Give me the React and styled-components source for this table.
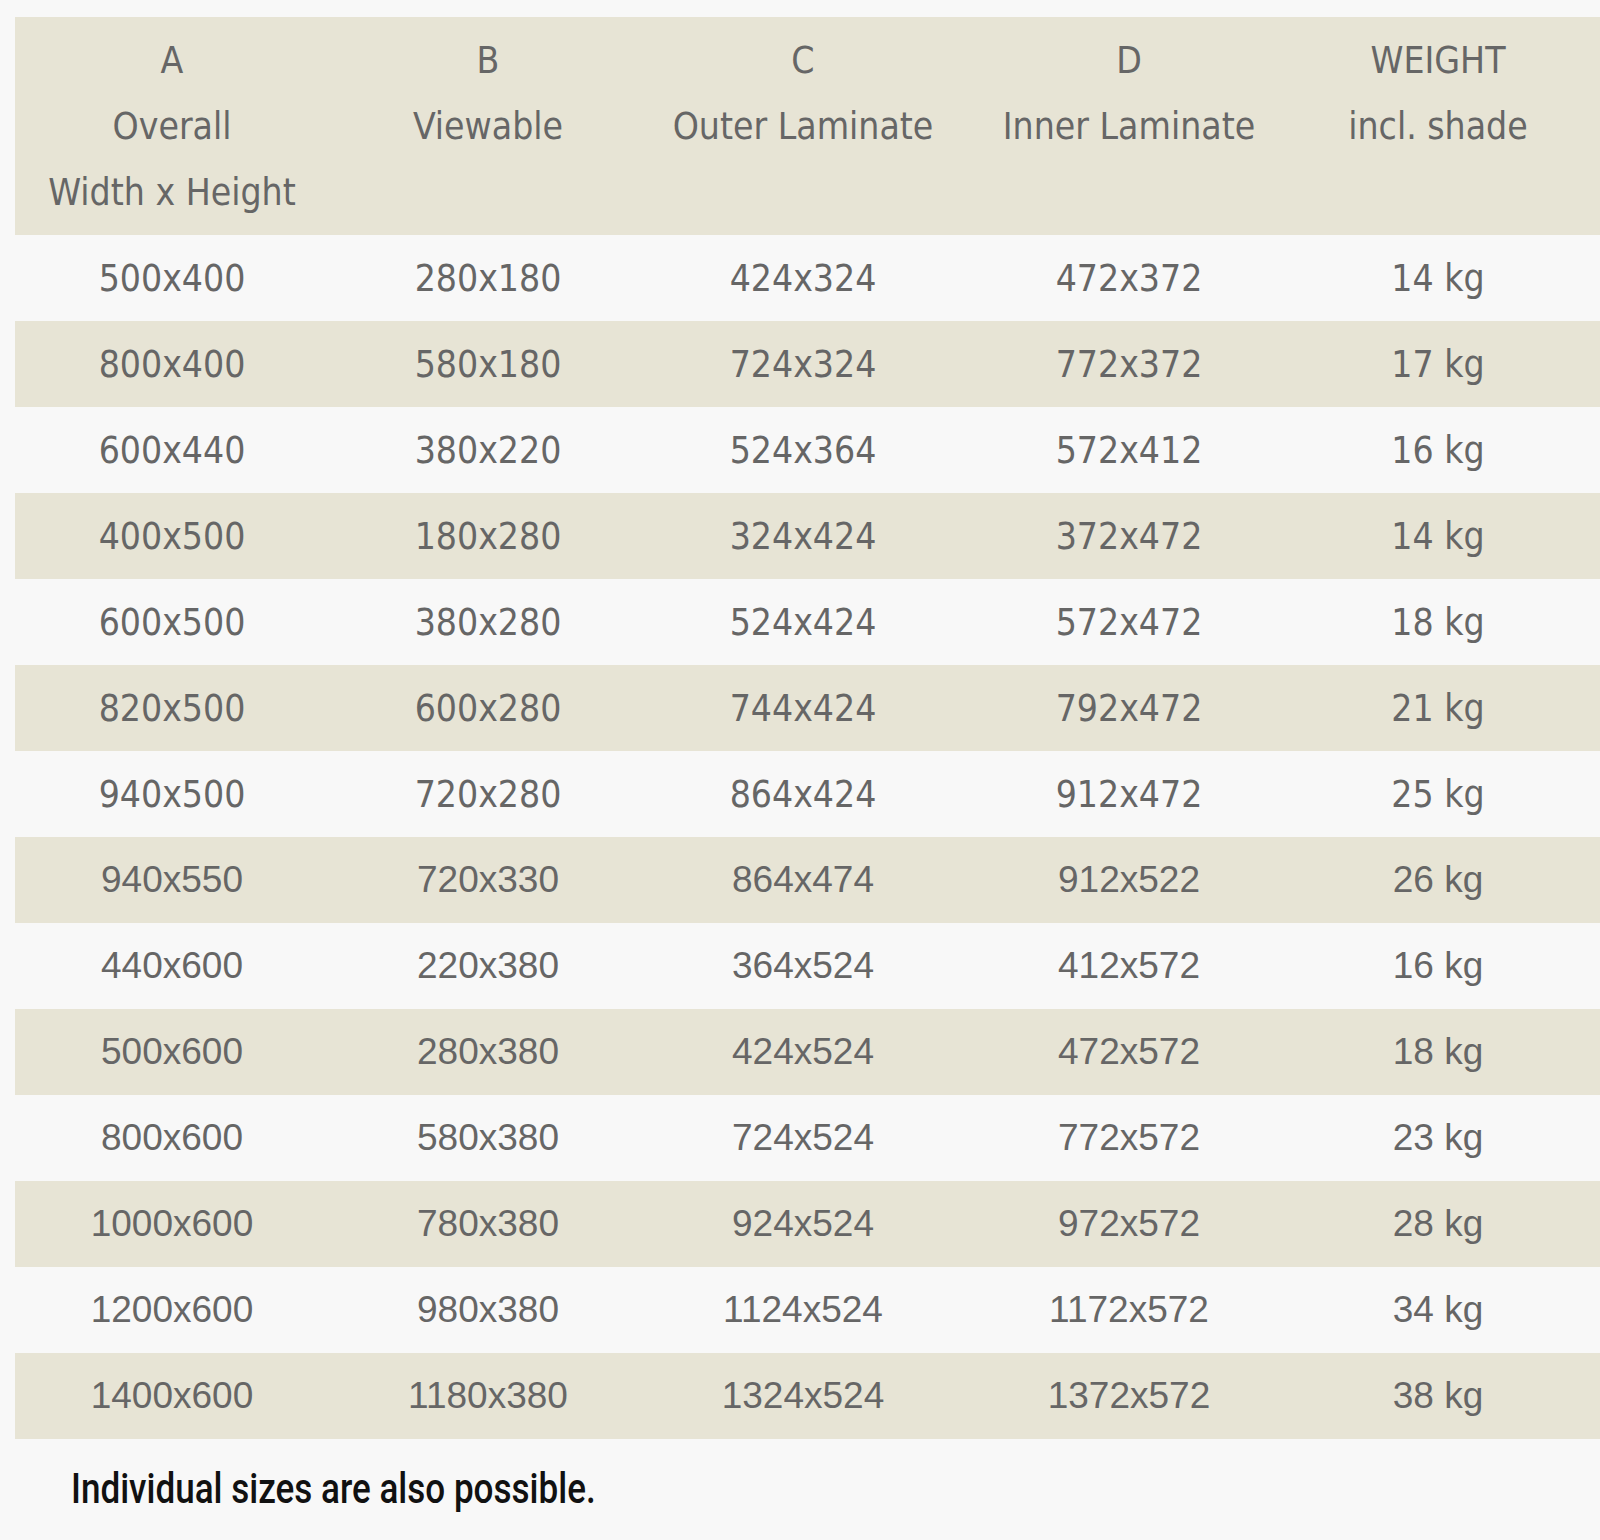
import React from 'react';
import styled, { createGlobalStyle } from 'styled-components';

const GlobalStyle = createGlobalStyle`
  html, body {
    margin: 0;
    padding: 0;
    background-color: #f8f8f8;
  }
`;

const headers = [
  ['A', 'Overall', 'Width x Height'],
  ['B', 'Viewable'],
  ['C', 'Outer Laminate'],
  ['D', 'Inner Laminate'],
  ['WEIGHT', 'incl. shade'],
];

// die ersten Zeilen in Tahoma, der Rest in Arial (so war es im Original)
const rows = [
  ['500x400', '280x180', '424x324', '472x372', '14 kg'],
  ['800x400', '580x180', '724x324', '772x372', '17 kg'],
  ['600x440', '380x220', '524x364', '572x412', '16 kg'],
  ['400x500', '180x280', '324x424', '372x472', '14 kg'],
  ['600x500', '380x280', '524x424', '572x472', '18 kg'],
  ['820x500', '600x280', '744x424', '792x472', '21 kg'],
  ['940x500', '720x280', '864x424', '912x472', '25 kg'],
  ['940x550', '720x330', '864x474', '912x522', '26 kg'],
  ['440x600', '220x380', '364x524', '412x572', '16 kg'],
  ['500x600', '280x380', '424x524', '472x572', '18 kg'],
  ['800x600', '580x380', '724x524', '772x572', '23 kg'],
  ['1000x600', '780x380', '924x524', '972x572', '28 kg'],
  ['1200x600', '980x380', '1124x524', '1172x572', '34 kg'],
  ['1400x600', '1180x380', '1324x524', '1372x572', '38 kg'],
];

const App = () => {
  return (
    <Page>
      <GlobalStyle />
      <SizeTable>
        <HeadRow>
          {headers.map((lines, i) => (
            <HeadCell key={i}>
              {lines.map((line) => (
                <div key={line}>{line}</div>
              ))}
            </HeadCell>
          ))}
          <HeadCell />
        </HeadRow>
        {rows.map((row, i) => (
          <Row key={row[0]} $striped={i % 2 === 1} $arial={i >= 7}>
            {row.map((value, j) => (
              <Cell key={j}>{value}</Cell>
            ))}
            <Cell />
          </Row>
        ))}
      </SizeTable>
      <Note>
        <NoteText>Individual sizes are also possible.</NoteText>
      </Note>
    </Page>
  );
};

export default App;

// ganze Seite
const Page = styled.div`
  padding: 17px 0 0 15px;
  min-height: 1523px;
  background-color: #f8f8f8;
  overflow: hidden;
`;

const SizeTable = styled.div`
  display: flex;
  flex-direction: column;
`;

const columns = `314px 318px 312px 340px 278px 1fr`;

// Kopfzeile
const HeadRow = styled.div`
  display: grid;
  grid-template-columns: ${columns};
  background-color: #e7e4d5;
  padding: 11px 0 9px;

  color: #666666;
  font-family: 'DejaVu Sans Condensed', 'DejaVu Sans', sans-serif;
  font-size: 37px;
  line-height: 66px;
`;

const HeadCell = styled.div`
  text-align: center;
  white-space: nowrap;
`;

const Row = styled.div`
  display: grid;
  grid-template-columns: ${columns};
  align-items: center;
  height: 86px;
  background-color: ${(props) => (props.$striped ? '#e7e4d5' : '#f8f8f8')};

  color: #666666;
  font-family: ${(props) =>
    props.$arial
      ? "'Liberation Sans', Arial, sans-serif"
      : "'DejaVu Sans Condensed', 'DejaVu Sans', sans-serif"};
  font-size: 37px;
`;

const Cell = styled.div`
  text-align: center;
  white-space: nowrap;
`;

// Hinweis unten (schmale Schrift)
const Note = styled.p`
  margin: 24px 0 0 56px;

  color: #111111;
  font-family: Roboto, 'Liberation Sans', sans-serif;
  font-weight: 500;
  font-size: 43px;
  line-height: 50px;
  white-space: nowrap;
`;

const NoteText = styled.span`
  display: inline-block;
  transform: scaleX(0.815);
  transform-origin: left center;
`;
